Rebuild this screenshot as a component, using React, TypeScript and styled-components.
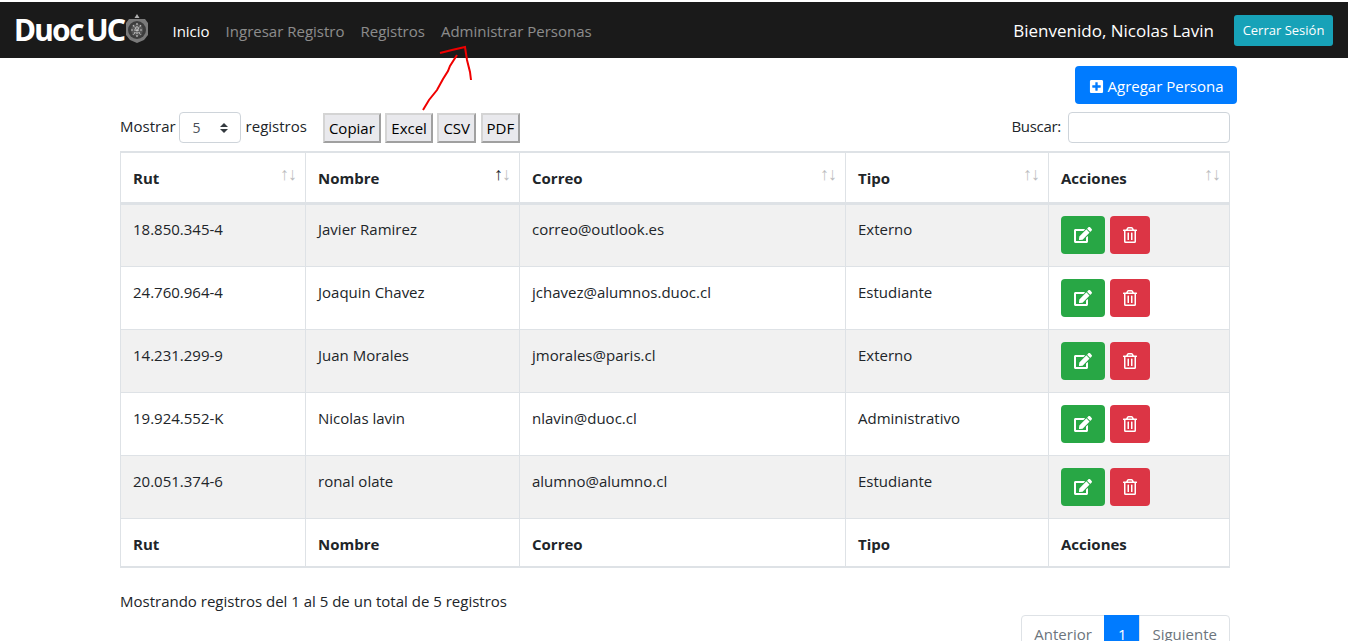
import React from "react";
import styled, { createGlobalStyle } from "styled-components";
import { FaEdit, FaPlusSquare, FaRegTrashAlt } from "react-icons/fa";

const GlobalStyle = createGlobalStyle`
    html, body {
        margin: 0;
        height: 641px;
        overflow: hidden;
        background: #fff;
    }
    body {
        font-family: "Open Sans", "Noto Sans", "Liberation Sans", sans-serif;
        font-size: 15px;
        line-height: 1.5;
        color: #212529;
    }
    * { box-sizing: border-box; }
`;

const Page = styled.div`
    position: relative;
    height: 641px;
    padding-top: 2px;
    background: #fff;
`;

const Navbar = styled.nav`
    display: flex;
    align-items: center;
    height: 56px;
    padding: 0 15px 0 14px;
    background: #1a1a1a;
`;

const Brand = styled.div`
    display: flex;
    align-items: center;
    margin-right: 23px;
`;

const BrandText = styled.span`
    font-family: "Noto Sans", "Liberation Sans", sans-serif;
    font-weight: 700;
    font-size: 30px;
    line-height: 1;
    color: #fff;
    letter-spacing: -1.7px;
`;

const BrandGap = styled.span`
    margin-left: 3px;
`;

const Crest = styled.svg`
    width: 24px;
    height: 30px;
    margin-left: 1px;
    margin-top: -3px;
`;

const NavLinks = styled.div`
    display: flex;
    gap: 16px;
    flex: 1;
    padding-top: 2px;
`;

const NavLink = styled.a<{ $active?: boolean }>`
    font-size: 15px;
    color: ${(p) => (p.$active ? "#fff" : "rgba(255, 255, 255, 0.5)")};
`;

const Welcome = styled.span`
    font-size: 17px;
    color: #fff;
    margin-right: 20px;
    padding-top: 2px;
`;

const LogoutButton = styled.button`
    width: 99px;
    height: 31px;
    padding: 2px 0 0;
    border: 0;
    border-radius: 3px;
    background: #17a2b8;
    color: #fff;
    font: inherit;
    font-size: 13px;
`;

const Container = styled.main`
    width: 1110px;
    margin-left: 120px;
`;

const ActionRow = styled.div`
    display: flex;
    justify-content: flex-end;
    margin: 8px -7px 8px 0;
`;

const AddButton = styled.button`
    display: flex;
    align-items: center;
    justify-content: center;
    gap: 4px;
    width: 162px;
    height: 38px;
    padding: 2px 0 0;
    border: 0;
    border-radius: 4px;
    background: #007bff;
    color: #fff;
    font: inherit;
    font-size: 15px;
`;

const Toolbar = styled.div`
    display: flex;
    align-items: center;
    height: 31px;
    margin-bottom: 8px;
`;

const Label = styled.span`
    font-size: 15px;
    margin-top: -2px;
`;

const SearchLabel = styled(Label)`
    letter-spacing: -0.3px;
`;

const LengthSelect = styled.div`
    display: flex;
    align-items: center;
    justify-content: space-between;
    width: 62px;
    height: 31px;
    margin: 0 5px 0 3px;
    padding: 0 12px 0 13px;
    border: 1px solid #ced4da;
    border-radius: 4px;
    font-size: 14px;
    color: #495057;
`;

const Carets = styled.svg`
    width: 8px;
    height: 10px;
`;

const ExportGroup = styled.div`
    display: flex;
    gap: 4.5px;
    margin-left: 16px;
`;

const ExportButton = styled.button`
    height: 30px;
    padding: 2px 4px 0;
    border-style: solid;
    border-width: 2px;
    border-color: #d4d4d4 #a0a0a0 #a0a0a0 #d4d4d4;
    background: #e9e9ed;
    color: #000;
    font: inherit;
    font-size: 15px;
`;

const SearchBox = styled.div`
    display: flex;
    align-items: center;
    margin-left: auto;
`;

const SearchInput = styled.input`
    width: 162px;
    height: 31px;
    margin-left: 7px;
    border: 1px solid #ced4da;
    border-radius: 4px;
    background: #fff;
`;

const Table = styled.table`
    width: 1109px;
    table-layout: fixed;
    border-collapse: collapse;
    border: 1px solid #dee2e6;
    border-top-width: 2px;
`;

const HeadCell = styled.th<{ $sort?: "none" | "asc" }>`
    position: relative;
    height: 51px;
    padding: 2px 12px 0;
    text-align: left;
    font-size: 15px;
    font-weight: 700;
    border-left: 1px solid #dee2e6;
    border-bottom: 3px solid #dee2e6;
    color: #212529;

    &::before, &::after {
        position: absolute;
        top: 7px;
        font-weight: 400;
        font-size: 18px;
        line-height: 1.5;
        color: #212529;
    }
    &::before {
        content: "↑";
        right: 16px;
        opacity: ${(p) => (p.$sort === "asc" ? 1 : 0.3)};
    }
    &::after {
        content: "↓";
        right: 8px;
        opacity: 0.3;
    }
`;

const FootCell = styled.th`
    height: 49px;
    padding: 3px 12px 0;
    text-align: left;
    font-size: 15px;
    font-weight: 700;
    border-left: 1px solid #dee2e6;
    border-bottom: 2px solid #dee2e6;
    border-top: 1px solid #dee2e6;
`;

const Row = styled.tr<{ $odd: boolean }>`
    background: ${(p) => (p.$odd ? "#f1f1f1" : "#fff")};
`;

const Cell = styled.td<{ $first?: boolean }>`
    height: 63px;
    padding: ${(p) => (p.$first ? "13px" : "14px")} 12px 0;
    vertical-align: top;
    font-size: 15px;
    border-left: 1px solid #dee2e6;
    border-bottom: 1px solid #dee2e6;
`;

const ActionCell = styled(Cell)`
    padding-top: ${(p) => (p.$first ? "11px" : "12px")};
`;

const CellActions = styled.div`
    display: flex;
    gap: 5px;
`;

const IconButton = styled.button<{ $color: string; $width: number }>`
    display: flex;
    align-items: center;
    justify-content: center;
    height: 38px;
    width: ${(p) => p.$width}px;
    padding: 0;
    border: 0;
    border-radius: 4px;
    background: ${(p) => p.$color};
    color: #fff;
    font-size: 15px;
`;

const Summary = styled.div`
    margin-top: 22px;
    font-size: 15px;
`;

const Pagination = styled.div`
    display: flex;
    justify-content: flex-end;
    margin-top: 2px;
`;

const PageItem = styled.a<{ $active?: boolean }>`
    height: 38px;
    padding: 7px ${(p) => (p.$active ? "13px" : "12px")};
    font-size: 15px;
    border: 1px solid ${(p) => (p.$active ? "#007bff" : "#dee2e6")};
    margin-left: -1px;
    background: ${(p) => (p.$active ? "#007bff" : "#fff")};
    color: ${(p) => (p.$active ? "#fff" : "#6c757d")};
    &:first-child { border-radius: 4px 0 0 4px; }
    &:last-child { border-radius: 0 4px 4px 0; }
`;

const ArrowOverlay = styled.svg`
    position: absolute;
    left: 0;
    top: 0;
    width: 600px;
    height: 130px;
    pointer-events: none;
`;

const columns = [
    { label: "Rut", width: 185 },
    { label: "Nombre", width: 214, sort: "asc" as const },
    { label: "Correo", width: 326 },
    { label: "Tipo", width: 203 },
    { label: "Acciones", width: 181 },
];

const personas = [
    { rut: "18.850.345-4", nombre: "Javier Ramirez", correo: "correo@outlook.es", tipo: "Externo" },
    { rut: "24.760.964-4", nombre: "Joaquin Chavez", correo: "jchavez@alumnos.duoc.cl", tipo: "Estudiante" },
    { rut: "14.231.299-9", nombre: "Juan Morales", correo: "jmorales@paris.cl", tipo: "Externo" },
    { rut: "19.924.552-K", nombre: "Nicolas lavin", correo: "nlavin@duoc.cl", tipo: "Administrativo" },
    { rut: "20.051.374-6", nombre: "ronal olate", correo: "alumno@alumno.cl", tipo: "Estudiante" },
];

export default function App() {
    return (
        <Page>
            <GlobalStyle />
            <Navbar>
                <Brand>
                    <BrandText>Duoc<BrandGap>UC</BrandGap></BrandText>
                    <Crest viewBox="0 0 24 30">
                        <path d="M12 0l2.5 4h-5z" fill="#b0b0b0" />
                        <path d="M4 5h16l3 4v12l-4 5-7 3-7-3-4-5V9z" fill="#7a7a7a" />
                        <circle cx="12" cy="16" r="9" fill="#3d3d3d" />
                        <circle cx="12" cy="16" r="6" fill="#565656" />
                        <path d="M8 11l8 10M16 11L8 21M12 9v14M6 16h12" stroke="#c0c0c0" strokeWidth="1.2" strokeDasharray="2 1" />
                    </Crest>
                </Brand>
                <NavLinks>
                    <NavLink $active>Inicio</NavLink>
                    <NavLink>Ingresar Registro</NavLink>
                    <NavLink>Registros</NavLink>
                    <NavLink>Administrar Personas</NavLink>
                </NavLinks>
                <Welcome>Bienvenido, Nicolas Lavin</Welcome>
                <LogoutButton>Cerrar Sesión</LogoutButton>
            </Navbar>
            <Container>
                <ActionRow>
                    <AddButton>
                        <FaPlusSquare size={15} />
                        Agregar Persona
                    </AddButton>
                </ActionRow>
                <Toolbar>
                    <Label>Mostrar</Label>
                    <LengthSelect>
                        5
                        <Carets viewBox="0 0 8 10">
                            <path d="M4 0l4 4H0zM4 10L0 6h8z" fill="#343a40" />
                        </Carets>
                    </LengthSelect>
                    <Label>registros</Label>
                    <ExportGroup>
                        <ExportButton>Copiar</ExportButton>
                        <ExportButton>Excel</ExportButton>
                        <ExportButton>CSV</ExportButton>
                        <ExportButton>PDF</ExportButton>
                    </ExportGroup>
                    <SearchBox>
                        <SearchLabel>Buscar:</SearchLabel>
                        <SearchInput />
                    </SearchBox>
                </Toolbar>
                <Table>
                    <colgroup>
                        {columns.map((c) => (
                            <col key={c.label} width={c.width} />
                        ))}
                    </colgroup>
                    <thead>
                        <tr>
                            {columns.map((c) => (
                                <HeadCell key={c.label} $sort={c.sort ?? "none"}>{c.label}</HeadCell>
                            ))}
                        </tr>
                    </thead>
                    <tbody>
                        {personas.map((p, i) => (
                            <Row key={p.rut} $odd={i % 2 === 0}>
                                <Cell $first={i === 0}>{p.rut}</Cell>
                                <Cell $first={i === 0}>{p.nombre}</Cell>
                                <Cell $first={i === 0}>{p.correo}</Cell>
                                <Cell $first={i === 0}>{p.tipo}</Cell>
                                <ActionCell $first={i === 0}>
                                    <CellActions>
                                        <IconButton $color="#28a745" $width={44}><FaEdit size={18} /></IconButton>
                                        <IconButton $color="#dc3545" $width={40}><FaRegTrashAlt size={16} /></IconButton>
                                    </CellActions>
                                </ActionCell>
                            </Row>
                        ))}
                    </tbody>
                    <tfoot>
                        <tr>
                            {columns.map((c) => (
                                <FootCell key={c.label}>{c.label}</FootCell>
                            ))}
                        </tr>
                    </tfoot>
                </Table>
                <Summary>Mostrando registros del 1 al 5 de un total de 5 registros</Summary>
                <Pagination>
                    <PageItem>Anterior</PageItem>
                    <PageItem $active>1</PageItem>
                    <PageItem>Siguiente</PageItem>
                </Pagination>
            </Container>
            <ArrowOverlay viewBox="0 0 600 130">
                <path
                    d="M423 110L429 100L437 90L443 79L448 71L450 66L457 55M440 53L452 50L465 47L467 60L470 72L471 80"
                    fill="none"
                    stroke="#f00000"
                    strokeWidth="2"
                />
            </ArrowOverlay>
        </Page>
    );
}
